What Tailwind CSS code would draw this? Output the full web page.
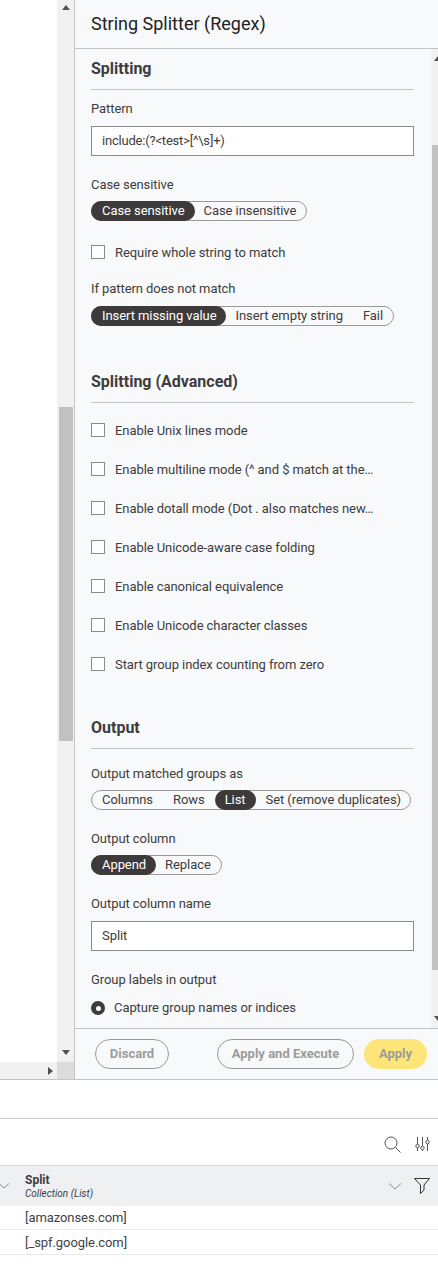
<!DOCTYPE html>
<html lang="en">
<head>
  <meta charset="UTF-8">
  <meta name="viewport" content="width=device-width, initial-scale=1.0">
  <title>String Splitter (Regex)</title>
  <script src="https://cdn.jsdelivr.net/npm/@tailwindcss/browser@4"></script>
</head>
<body class="bg-white overflow-hidden font-['Roboto',sans-serif] text-[13px] text-[#3e3c3c]">

  <div class="flex h-[1079px] w-[438px]">
    <!-- left table area with its scrollbars -->
    <div class="w-[75px] shrink-0 flex flex-col border-r border-[#c4c4c4]">
      <div class="flex flex-1 min-h-0">
        <div class="flex-1 bg-white"></div>
        <div class="w-[17px] bg-[#f1f1f1] flex flex-col items-center">
          <div class="h-[407px] w-full pt-[5px] flex justify-center">
            <div class="w-0 h-0 border-x-[4px] border-x-transparent border-b-[5px] border-b-[#505050]"></div>
          </div>
          <div class="w-[14px] h-[334px] bg-[#c1c1c1]"></div>
          <div class="flex-1 w-full flex justify-center items-end pb-[7px]">
            <div class="w-0 h-0 border-x-[4px] border-x-transparent border-t-[5px] border-t-[#505050]"></div>
          </div>
        </div>
      </div>
      <div class="h-[17px] flex">
        <div class="flex-1 bg-[#f1f1f1] flex items-center justify-end pr-[4px]">
          <div class="w-0 h-0 border-y-[4px] border-y-transparent border-l-[5px] border-l-[#505050]"></div>
        </div>
        <div class="w-[17px] bg-[#dcdcdc]"></div>
      </div>
    </div>

    <!-- dialog panel -->
    <div class="flex-1 min-w-0 bg-[#f8f9fb] flex flex-col">
      <div class="h-[49px] shrink-0 border-b border-[#c4c4c4] pl-4 flex items-center">
        <h1 class="text-[18px] leading-[50px] text-[#222222]">String Splitter (Regex)</h1>
      </div>

      <div class="h-[979px] shrink-0 flex">
        <div class="flex-1 min-w-0 pl-4 pr-[17px] overflow-hidden tracking-[-0.07px] whitespace-nowrap">
          <h2 class="mt-[10px] h-5 leading-5 text-[16px] font-bold tracking-normal">Splitting</h2>
          <div class="mt-[10px] border-t border-[#c4c4c4]"></div>

          <div class="mt-[11px] h-4 leading-4">Pattern</div>
          <input class="mt-[9px] block w-full h-[30px] px-[10px] pb-[2px] bg-white border border-[#8c8c8c] text-[13px] tracking-[-0.2px] outline-none" value="include:(?&lt;test&gt;[^\s]+)">

          <div class="mt-[21px] h-4 leading-4">Case sensitive</div>
          <div class="mt-2 inline-flex h-5 rounded-full border border-[#9a9a9a] leading-[18px] align-top">
            <span class="-m-px h-5 leading-5 pl-[11px] pr-[10px] rounded-full bg-[#3e3a3a] text-white">Case sensitive</span>
            <span class="px-[10px]">Case insensitive</span>
          </div>

          <label class="mt-[24px] flex items-center h-[14px] gap-[10px]">
            <span class="w-[14px] h-[14px] bg-white border border-[#8c8c8c]"></span>
            <span class="leading-4 pt-[2px]">Require whole string to match</span>
          </label>

          <div class="mt-[22px] h-4 leading-4">If pattern does not match</div>
          <div class="mt-[9px] inline-flex h-5 rounded-full border border-[#9a9a9a] leading-[18px] align-top">
            <span class="-m-px h-5 leading-5 pl-[11px] pr-[10px] rounded-full bg-[#3e3a3a] text-white">Insert missing value</span>
            <span class="px-[10px]">Insert empty string</span>
            <span class="px-[10px]">Fail</span>
          </div>

          <h2 class="mt-[46px] h-5 leading-5 text-[16px] font-bold tracking-normal">Splitting (Advanced)</h2>
          <div class="mt-[10px] border-t border-[#c4c4c4]"></div>

          <div class="mt-[20px] flex flex-col gap-[25px]">
            <label class="flex items-center h-[14px] gap-[10px]"><span class="w-[14px] h-[14px] bg-white border border-[#8c8c8c]"></span><span class="leading-4 pt-[2px]">Enable Unix lines mode</span></label>
            <label class="flex items-center h-[14px] gap-[10px]"><span class="w-[14px] h-[14px] bg-white border border-[#8c8c8c]"></span><span class="leading-4 pt-[2px]">Enable multiline mode (^ and $ match at the…</span></label>
            <label class="flex items-center h-[14px] gap-[10px]"><span class="w-[14px] h-[14px] bg-white border border-[#8c8c8c]"></span><span class="leading-4 pt-[2px]">Enable dotall mode (Dot . also matches new…</span></label>
            <label class="flex items-center h-[14px] gap-[10px]"><span class="w-[14px] h-[14px] bg-white border border-[#8c8c8c]"></span><span class="leading-4 pt-[2px]">Enable Unicode-aware case folding</span></label>
            <label class="flex items-center h-[14px] gap-[10px]"><span class="w-[14px] h-[14px] bg-white border border-[#8c8c8c]"></span><span class="leading-4 pt-[2px]">Enable canonical equivalence</span></label>
            <label class="flex items-center h-[14px] gap-[10px]"><span class="w-[14px] h-[14px] bg-white border border-[#8c8c8c]"></span><span class="leading-4 pt-[2px]">Enable Unicode character classes</span></label>
            <label class="flex items-center h-[14px] gap-[10px]"><span class="w-[14px] h-[14px] bg-white border border-[#8c8c8c]"></span><span class="leading-4 pt-[2px]">Start group index counting from zero</span></label>
          </div>

          <h2 class="mt-[47px] h-5 leading-5 text-[16px] font-bold tracking-normal">Output</h2>
          <div class="mt-[10px] border-t border-[#c4c4c4]"></div>

          <div class="mt-[17px] h-4 leading-4">Output matched groups as</div>
          <div class="mt-[8px] inline-flex h-5 rounded-full border border-[#9a9a9a] leading-[18px] align-top pl-[10px]">
            <span class="pr-[20px]">Columns</span>
            <span class="pr-[10px]">Rows</span>
            <span class="-my-px h-5 leading-5 px-[10px] rounded-full bg-[#3e3a3a] text-white">List</span>
            <span class="pl-[10px] pr-[9px]">Set (remove duplicates)</span>
          </div>

          <div class="mt-[21px] h-4 leading-4">Output column</div>
          <div class="mt-[8px] inline-flex h-5 rounded-full border border-[#9a9a9a] leading-[18px] align-top">
            <span class="-m-px h-5 leading-5 pl-[11px] pr-[10px] rounded-full bg-[#3e3a3a] text-white">Append</span>
            <span class="px-[10px]">Replace</span>
          </div>

          <div class="mt-[21px] h-4 leading-4">Output column name</div>
          <input class="mt-[9px] block w-full h-[30px] px-[10px] pb-[2px] bg-white border border-[#8c8c8c] text-[13px] outline-none" value="Split">

          <div class="mt-[21px] h-4 leading-4">Group labels in output</div>
          <label class="mt-[13px] flex items-center h-[14px] gap-[9px]">
            <span class="w-[14px] h-[14px] rounded-full bg-[#3e3a3a] flex items-center justify-center"><span class="w-[5px] h-[5px] rounded-full bg-white"></span></span>
            <span>Capture group names or indices</span>
          </label>
        </div>

        <!-- inner scrollbar, cut off by the window -->
        <div class="w-[7px] shrink-0 bg-[#f1f1f1] flex flex-col overflow-hidden">
          <div class="h-[96px] pt-[7px] pl-[3px]">
            <div class="w-0 h-0 border-x-[4px] border-x-transparent border-b-[5px] border-b-[#505050]"></div>
          </div>
          <div class="h-[825px] ml-px bg-[#c1c1c1]"></div>
          <div class="flex-1 flex items-end pb-[7px] pl-[3px]">
            <div class="w-0 h-0 border-x-[4px] border-x-transparent border-t-[5px] border-t-[#505050]"></div>
          </div>
        </div>
      </div>

      <div class="flex-1 border-t border-[#c4c4c4] flex items-start pt-[10px] pl-[20px] pr-[11px] font-bold text-[#9c9c9c]">
        <button class="h-[30px] w-[74px] rounded-full border border-[#9a9a9a]">Discard</button>
        <button class="ml-auto h-[30px] w-[137px] rounded-full border border-[#9a9a9a]">Apply and Execute</button>
        <button class="ml-[10px] h-[30px] w-[63px] rounded-full bg-[#fde57a]">Apply</button>
      </div>
    </div>
  </div>

  <!-- lower data table -->
  <div class="border-t border-[#c4c4c4] h-[39px]"></div>
  <div class="border-t border-[#c8c8c8] h-[47px] flex items-start justify-end pr-[8px] pt-[17px] gap-[14px]">
    <svg class="w-[17px] h-[17px]" viewBox="0 0 17 17" fill="none" stroke="#555555" stroke-width="1"><circle cx="7" cy="7" r="6"/><path d="M11.5 11.5L16.5 16.5"/></svg>
    <svg class="w-[15px] h-[16px]" viewBox="0 0 15 16" fill="none" stroke="#555555" stroke-width="1"><path d="M2.5 1V8M2.5 12V15M7.5 1V10M7.5 14V15M12.5 1V4M12.5 8V15"/><circle cx="2.5" cy="10" r="1.7"/><circle cx="7.5" cy="12" r="1.7"/><circle cx="12.5" cy="6" r="1.7"/></svg>
  </div>
  <div class="h-[41px] border-t border-[#d8d8d8] bg-[#eef0f2] flex items-center">
    <svg class="w-[10px] h-[6px] shrink-0" viewBox="0 0 10 6" fill="none" stroke="#8a8a8a"><path d="M-1 0.5L4 5L9 0.5"/></svg>
    <div class="ml-[15px] flex-1">
      <div class="text-[12px] leading-[14px] font-bold">Split</div>
      <div class="text-[10px] leading-[12px] italic mt-px">Collection (List)</div>
    </div>
    <svg class="w-[14px] h-[7px] mr-[12px]" viewBox="0 0 14 7" fill="none" stroke="#8a8a8a"><path d="M1 0.5L7 6L13 0.5"/></svg>
    <svg class="w-[16px] h-[16px] mr-[8px]" viewBox="0 0 16 16" fill="none" stroke="#333333"><path d="M0.5 0.5H15.5L10 7V12L6.5 15.5V7Z"/></svg>
  </div>
  <div class="h-[24px] border-b border-[#e6e8ea] pl-[25px] leading-[24px] text-[#3f4147] tracking-[-0.07px]">[amazonses.com]</div>
  <div class="h-[25px] border-b border-[#e6e8ea] pl-[25px] leading-[25px] text-[#3f4147] tracking-[-0.07px]">[_spf.google.com]</div>

</body>
</html>
